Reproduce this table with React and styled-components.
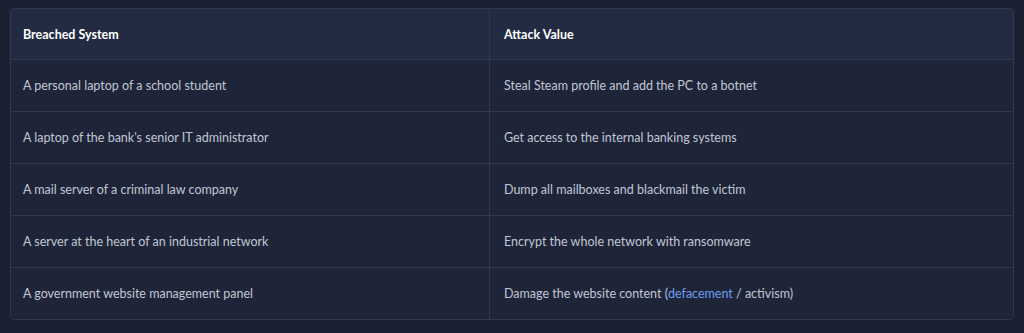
import React from 'react'
import styled, { createGlobalStyle } from 'styled-components'

const GlobalStyle = createGlobalStyle`
  html, body {
    margin: 0;
    padding: 0;
    background: #1b2133;
  }
  body {
    font-family: Lato, "Noto Sans", sans-serif;
    -webkit-font-smoothing: antialiased;
  }
`

const Page = styled.div`
  padding: 8px 10px;
`

const Table = styled.div`
  display: grid;
  grid-template-columns: 478px 1fr;
  border: 1px solid #2f384c;
  border-radius: 4px;
  overflow: hidden;
  background: #1e2539;
`

const Cell = styled.div`
  display: flex;
  align-items: center;
  height: ${props => props.header ? '50px' : '51px'};
  padding: 0 ${props => props.second ? '14px' : '12px'};
  background: ${props => props.header ? '#222b42' : '#1e2539'};
  border-top: ${props => props.first ? 'none' : '1px solid #2f384c'};
  border-left: ${props => props.second ? '1px solid #2f384c' : 'none'};
  color: ${props => props.header ? '#ffffff' : '#c1c7d3'};
  font-size: 12.5px;
  font-weight: ${props => props.header ? 700 : 400};
  white-space: pre;
`

const Link = styled.a`
  color: #6f9cf2;
  text-decoration: none;
`

const rows = [
  ['A personal laptop of a school student', 'Steal Steam profile and add the PC to a botnet'],
  ["A laptop of the bank's senior IT administrator", 'Get access to the internal banking systems'],
  ['A mail server of a criminal law company', 'Dump all mailboxes and blackmail the victim'],
  ['A server at the heart of an industrial network', 'Encrypt the whole network with ransomware'],
  ['A government website management panel', <>Damage the website content (<Link href='#'>defacement</Link>{' / activism)'}</>]
]

const App = () => (
  <Page>
    <GlobalStyle />
    <Table>
      <Cell header first>Breached System</Cell>
      <Cell header first second>Attack Value</Cell>
      {rows.map((r, i) =>
        <React.Fragment key={i}>
          <Cell>{r[0]}</Cell>
          <Cell second>{r[1]}</Cell>
        </React.Fragment>
      )}
    </Table>
  </Page>
)

export default App
